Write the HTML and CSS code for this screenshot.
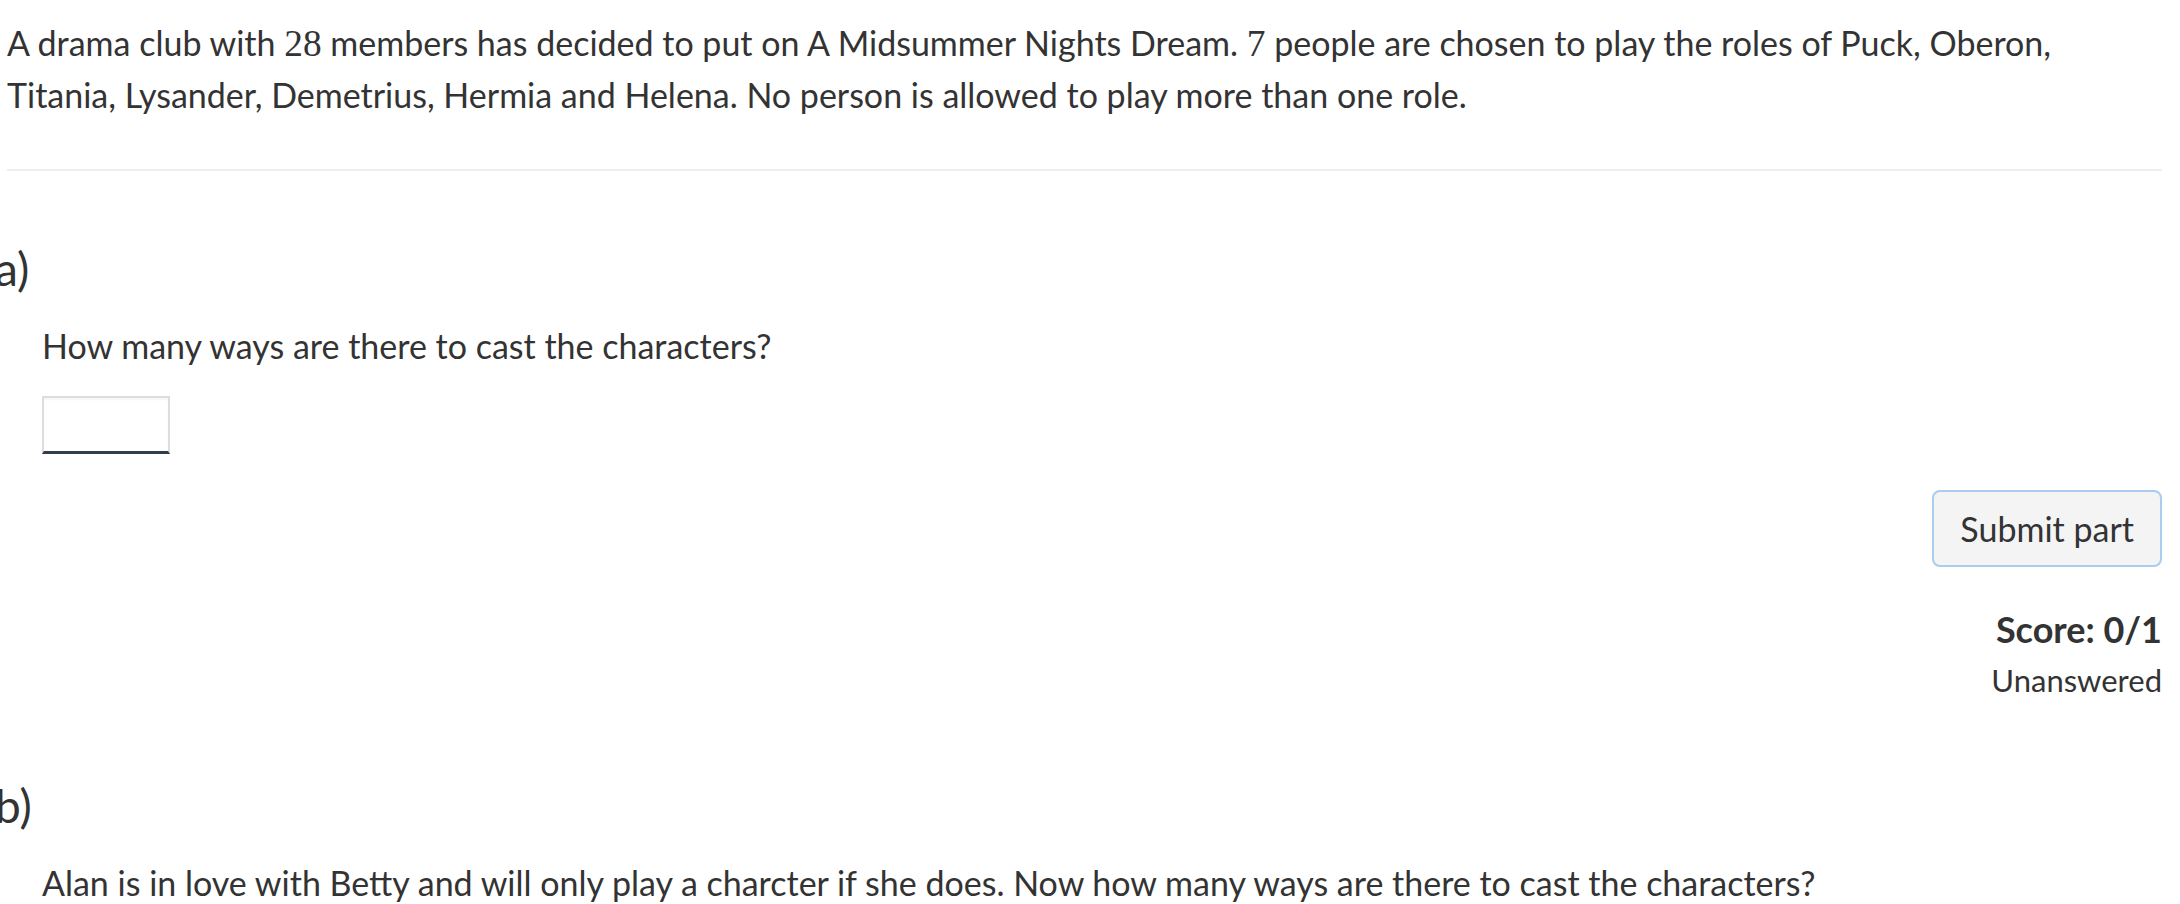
FILE: index.html
```html
<!DOCTYPE html>
<html lang="en">
<head>
<meta charset="utf-8">
<title>A Midsummer Nights Dream</title>
<link rel="stylesheet" href="styles.css">
</head>
<body>
<div class="page">
  <p class="statement">A drama club with <span class="math">28</span> members has decided to put on A Midsummer Nights Dream. <span class="math">7</span> people are chosen to play the roles of Puck, Oberon, Titania, Lysander, Demetrius, Hermia and Helena. No person is allowed to play more than one role.</p>
  <hr class="divider">
  <section class="part">
    <h3 class="part-label">a)</h3>
    <div class="part-body">
      <p class="prompt">How many ways are there to cast the characters?</p>
      <input class="answer" type="text" aria-label="Answer">
    </div>
    <div class="part-footer">
      <button class="submit" type="button">Submit part</button>
      <div class="score">Score: 0/1</div>
      <div class="status">Unanswered</div>
    </div>
  </section>
  <section class="part part-b">
    <h3 class="part-label">b)</h3>
    <div class="part-body">
      <p class="prompt">Alan is in love with Betty and will only play a charcter if she does. Now how many ways are there to cast the characters?</p>
    </div>
  </section>
</div>
</body>
</html>
```
FILE: styles.css
```css
html, body {
  margin: 0;
  padding: 0;
  background: #ffffff;
}

body {
  font-family: "Lato", "Noto Sans", sans-serif;
  font-size: 34px;
  line-height: 51px;
  color: #333333;
  overflow: hidden;
}

.page {
  padding: 17px 18px 0 7px;
}

.statement {
  margin: 0;
}

.math {
  font-family: "Liberation Serif", "DejaVu Serif", serif;
  font-size: 1.1em;
}

.divider {
  margin: 49px 0 0 0;
  border: 0;
  border-top: 2px solid #eeeeee;
  height: 0;
}

.part {
  display: flex;
  flex-direction: column;
}

.part-label {
  margin: 70px 0 0 -12px;
  font-size: 46px;
  line-height: 56px;
  font-weight: 400;
}

.part-b .part-label {
  margin-top: 73px;
}

.part-body {
  padding-left: 35px;
}

.prompt {
  margin: 23px 0 0 0;
}

.answer {
  display: block;
  box-sizing: border-box;
  width: 128px;
  height: 58px;
  margin-top: 25px;
  border: 2px solid #dddddd;
  border-bottom: 3px solid #323f4b;
  border-radius: 0;
  box-shadow: inset 0 2px 2px rgba(0, 0, 0, 0.04);
  background: #ffffff;
  outline: none;
}

.part-footer {
  display: flex;
  flex-direction: column;
  align-items: flex-end;
}

.submit {
  box-sizing: border-box;
  height: 77px;
  margin-top: 36px;
  padding: 0 26px;
  background: #f4f4f4;
  border: 2px solid #a8cdee;
  border-radius: 8px;
  font-family: "Lato", "Noto Sans", sans-serif;
  font-size: 34px;
  color: #333333;
}

.score {
  margin-top: 38px;
  font-size: 36px;
  line-height: 49px;
  font-weight: 700;
}

.status {
  margin-top: 2px;
  font-size: 31px;
  line-height: 49px;
}
```
